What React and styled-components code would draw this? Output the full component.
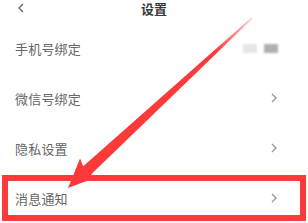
import React from 'react';
import styled, { createGlobalStyle } from 'styled-components';

const GlobalStyle = createGlobalStyle`
  html, body {
    margin: 0;
    padding: 0;
    background: #fff;
  }
  body {
    font-family: "Noto Sans CJK SC", "Noto Sans", sans-serif;
  }
`;

const Screen = styled.div`
  position: relative;
  width: 308px;
  height: 223px;
  overflow: hidden;
  background: #fff;
`;

const Header = styled.div`
  position: relative;
  display: flex;
  justify-content: center;
  align-items: flex-start;
  height: 23px;
  padding-top: 1px;
  box-sizing: border-box;
`;

const Title = styled.div`
  font-size: 13px;
  line-height: 15px;
  font-weight: 700;
  color: #3a3a3a;
`;

const Back = styled.div`
  position: absolute;
  left: 17px;
  top: 2px;
  width: 8px;
  height: 12px;
  display: flex;
`;

const List = styled.div`
  display: flex;
  flex-direction: column;
`;

const Row = styled.div`
  display: flex;
  align-items: center;
  justify-content: space-between;
  height: 50px;
  padding: 0 30px 0 15px;
  box-sizing: border-box;
  outline: ${({ $marked }) => ($marked ? '6px solid #fd3a3a' : 'none')};
  outline-offset: -8px;
`;

const Label = styled.span`
  font-size: 13px;
  color: #666;
  letter-spacing: 0.2px;
`;

const Masked = styled.div`
  display: flex;
  gap: 7px;
`;

const Blur = styled.div`
  width: 14px;
  height: 9px;
  background: ${({ $dark }) => ($dark ? '#b0b0b0' : '#e6e6e6')};
  filter: blur(0.8px);
`;

const Overlay = styled.svg`
  position: absolute;
  left: 0;
  top: 0;
  pointer-events: none;
`;

function Chevron() {
  return (
    <svg width="8" height="12" viewBox="0 0 8 12">
      <polyline points="2,2 6,6 2,10" fill="none" stroke="#9a9a9a" strokeWidth="1.4" />
    </svg>
  );
}

const rows = [
  { label: '手机号绑定', masked: true },
  { label: '微信号绑定' },
  { label: '隐私设置' },
  { label: '消息通知', marked: true },
];

export default function App() {
  return (
    <Screen>
      <GlobalStyle />
      <Header>
        <Back>
          <svg width="8" height="12" viewBox="0 0 8 12">
            <polyline points="6,2 2,6 6,10" fill="none" stroke="#666" strokeWidth="1.3" />
          </svg>
        </Back>
        <Title>设置</Title>
      </Header>
      <List>
        {rows.map((r) => (
          <Row key={r.label} $marked={r.marked}>
            <Label>{r.label}</Label>
            {r.masked ? (
              <Masked>
                <Blur />
                <Blur $dark />
              </Masked>
            ) : (
              <Chevron />
            )}
          </Row>
        ))}
      </List>
      <Overlay width="308" height="223" viewBox="0 0 308 223">
        <defs>
          <linearGradient id="fade" x1="252" y1="18" x2="68" y2="188" gradientUnits="userSpaceOnUse">
            <stop offset="0" stopColor="#fd3a3a" stopOpacity="0.25" />
            <stop offset="0.2" stopColor="#fd3a3a" stopOpacity="1" />
            <stop offset="1" stopColor="#fd3a3a" stopOpacity="1" />
          </linearGradient>
        </defs>
        <polygon
          fill="url(#fade)"
          points="251.4,17.4 83.2,166.2 80,158.5 68,188 98.4,176.5 91,174.4 252.6,18.6"
        />
      </Overlay>
    </Screen>
  );
}
